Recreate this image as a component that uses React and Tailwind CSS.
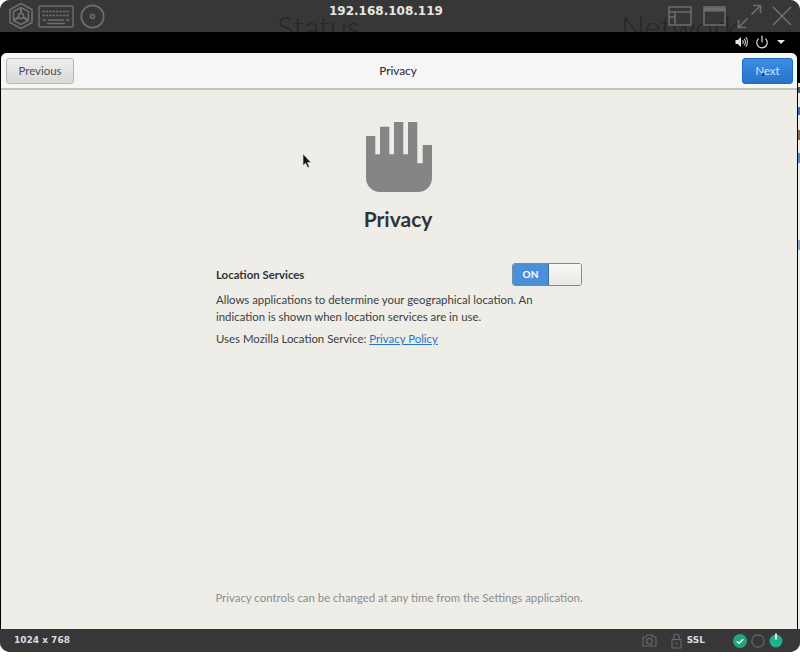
import { Power } from "lucide-react";

const UI_FONT = "font-['Lato',sans-serif]";

function LogoIcon() {
  return (
    <svg width="26" height="28" viewBox="0 0 26 28" fill="none" stroke="#6e6e6e" strokeWidth="1.6" strokeLinejoin="round">
      <path d="M13 1.5 24 7.5V20.5L13 26.5 2 20.5V7.5Z" />
      <path d="M13 5.5 20.5 9.5V18.5L13 22.5 5.5 18.5V9.5Z" />
      <circle cx="13" cy="14" r="2.6" />
      <path d="M13 5.5V11.4M5.5 18.5 10.7 15.3M20.5 18.5 15.3 15.3" strokeWidth="2.2" />
    </svg>
  );
}

function KeyboardIcon() {
  return (
    <svg width="36" height="23" viewBox="0 0 36 23" fill="none" stroke="#6e6e6e">
      <rect x="1" y="1" width="34" height="21" rx="1.5" strokeWidth="1.5" />
      <path d="M4.5 6.5H31.5M4.5 10.5H31.5" strokeWidth="1.6" strokeDasharray="2.4 1" />
      <path d="M4.5 15H8M10 15H26M28 15H31.5M9 18.5H27" strokeWidth="1.4" />
    </svg>
  );
}

function DiscIcon() {
  return (
    <svg width="25" height="25" viewBox="0 0 25 25" fill="none" stroke="#6e6e6e">
      <circle cx="12.5" cy="12.5" r="11.2" strokeWidth="1.7" />
      <circle cx="12.5" cy="12.5" r="2" strokeWidth="1.6" />
    </svg>
  );
}

function LayoutIcon() {
  return (
    <svg width="24" height="20" viewBox="0 0 24 20" fill="none" stroke="#6e6e6e" strokeWidth="1.5">
      <rect x="1" y="1" width="22" height="18" />
      <path d="M1 6H23M7 6V19M1 11H7" />
    </svg>
  );
}

function WindowIcon() {
  return (
    <svg width="23" height="20" viewBox="0 0 23 20" fill="none" stroke="#6e6e6e" strokeWidth="1.5">
      <rect x="1" y="1" width="21" height="18" />
      <path d="M1 3.5H22" strokeWidth="4" />
    </svg>
  );
}

function ExpandIcon() {
  return (
    <svg width="25" height="25" viewBox="0 0 25 25" fill="none" stroke="#6e6e6e" strokeWidth="1.7">
      <path d="M14.5 10.5 23.5 1.5M16 1.5H23.5V9M10.5 14.5 1.5 23.5M1.5 16V23.5H9" />
    </svg>
  );
}

function CloseIcon() {
  return (
    <svg width="20" height="20" viewBox="0 0 20 20" fill="none" stroke="#6e6e6e" strokeWidth="1.7">
      <path d="M1 1 19 19M19 1 1 19" />
    </svg>
  );
}

function SpeakerIcon() {
  return (
    <svg width="13" height="12" viewBox="0 0 13 12" fill="none">
      <path d="M0.5 4H2.8L6 1V11L2.8 8H0.5Z" fill="#e4e4e4" />
      <path d="M7.6 4.2C8.4 5.2 8.4 6.8 7.6 7.8M9.2 2.8C10.7 4.6 10.7 7.4 9.2 9.2M10.8 1.2C13 3.8 13 8.2 10.8 10.8" stroke="#d0d0d0" strokeWidth="1.1" />
    </svg>
  );
}

function HandIcon() {
  return (
    <svg width="66" height="70" viewBox="0 0 66 70" fill="#858585">
      <path d="M0 14H9.3V32.3H14V4.7H23.3V32.3H28V0H37.3V32.3H42V0H51.3V41.3H56.7V23H66V56a14 14 0 0 1-14 14H14A14 14 0 0 1 0 56Z" />
    </svg>
  );
}

function CursorIcon() {
  return (
    <svg width="10" height="16" viewBox="0 0 10 16">
      <path d="M1 1V12.5L3.6 10.2 5.6 14.6 7.4 13.8 5.4 9.6H9Z" fill="#111" stroke="#d8d8d8" strokeWidth="0.7" />
    </svg>
  );
}

function CameraIcon() {
  return (
    <svg width="15" height="13" viewBox="0 0 15 13" fill="none" stroke="#696969" strokeWidth="1.1">
      <path d="M1 3H4L5 1H10L11 3H14V12H1Z" />
      <circle cx="7.5" cy="7.2" r="2.8" />
    </svg>
  );
}

function LockIcon() {
  return (
    <svg width="11" height="16" viewBox="0 0 11 16" fill="none" stroke="#696969" strokeWidth="1.1">
      <rect x="1" y="6.5" width="9" height="8.5" />
      <path d="M2.8 6.5V3.8C2.8 0.4 8.2 0.4 8.2 3.8V6.5" />
      <path d="M5.5 9.5V11.5" strokeWidth="1.6" />
    </svg>
  );
}

function StatusIcons() {
  return (
    <div className="flex items-center gap-[4px]">
      <svg width="14" height="14" viewBox="0 0 14 14" fill="none">
        <circle cx="7" cy="7" r="7" fill="#1fa67f" />
        <path d="M3.8 7.2 6 9.2 10.2 5.2" stroke="#eefaf6" strokeWidth="1.5" />
      </svg>
      <svg width="14" height="14" viewBox="0 0 14 14" fill="none">
        <circle cx="7" cy="7" r="6.2" stroke="#666" strokeWidth="1.2" />
      </svg>
      <svg width="14" height="15" viewBox="0 0 14 15" fill="none">
        <circle cx="7" cy="8" r="6.5" fill="#1fb28a" />
        <path d="M7 0.5V6.5" stroke="#e8e8e8" strokeWidth="2" />
      </svg>
    </div>
  );
}

// sliver of the page behind the guest screen, visible at the right edge
function BackdropSliver() {
  return (
    <div className="ml-[1px] mt-[30px] flex w-[2px] flex-col bg-[#ececec]">
      <div className="mt-[4px] h-[6px] bg-[#555555]" />
      <div className="mt-[14px] h-[8px] bg-[#3f6fb5]" />
      <div className="mt-[15px] h-[10px] bg-[#8a6a4a]" />
      <div className="mt-[13px] h-[10px] bg-[#5f88c0]" />
      <div className="mt-[77px] h-[10px] bg-[#8fa8c8]" />
    </div>
  );
}

export default function App() {
  return (
    <div className="h-[660px] w-[800px] overflow-hidden bg-white">
      <div className="flex h-[652px] flex-col overflow-hidden rounded-[10px] bg-[#373737]">
        {/* viewer title bar */}
        <div className="relative flex h-[32px] shrink-0 items-center justify-between overflow-hidden bg-[#373737] pl-[8px] pr-[8px]">
          <span className="absolute left-[277px] top-[9px] font-['Lato',sans-serif] text-[31.5px] leading-[36px] font-light text-[#262626]">Status</span>
          <span className="absolute left-[621px] top-[9px] font-['Lato',sans-serif] text-[31.5px] leading-[36px] font-light text-[#262626]">Network</span>
          <div className="relative flex items-center">
            <LogoIcon />
            <div className="ml-[4px]"><KeyboardIcon /></div>
            <div className="ml-[6px]"><DiscIcon /></div>
          </div>
          <span className="absolute left-[329px] top-[3px] font-['DejaVu_Sans',sans-serif] text-[12px] leading-[16px] font-bold text-[#e6e6e6]">192.168.108.119</span>
          <div className="relative flex items-center">
            <LayoutIcon />
            <div className="ml-[11px]"><WindowIcon /></div>
            <div className="ml-[11px]"><ExpandIcon /></div>
            <div className="ml-[10px]"><CloseIcon /></div>
          </div>
        </div>

        {/* guest screen */}
        <div className="flex min-h-0 flex-1 flex-col bg-black">
          <div className="flex h-[21px] shrink-0 items-center justify-end gap-[8px] pr-[15px] pb-[2px]">
            <div className="mr-[-1px]"><SpeakerIcon /></div>
            <Power size={14} color="#e4e4e4" strokeWidth={2} />
            <div className="h-0 w-0 border-x-[4px] border-t-[4px] border-x-transparent border-t-[#e4e4e4]" />
          </div>

          <div className="flex min-h-0 flex-1 pl-[1px]">
            <div className={`relative flex min-w-0 flex-1 flex-col overflow-hidden rounded-t-[6px] bg-[#eeede7] text-[#2e3436] ${UI_FONT}`}>
              {/* header */}
              <div className="relative flex h-[37px] shrink-0 items-center justify-between border-b-2 border-[#c4c4bf] bg-[#f6f6f6] pl-[5px] pr-[4px]">
                <button className="flex h-[26px] w-[68px] items-center justify-center rounded-[3px] border border-[#b8b8b4] bg-gradient-to-b from-[#eeeeec] to-[#d8d8d6] text-[11.4px] text-[#4a4f50]">
                  Previous
                </button>
                <span className="absolute left-0 right-[2px] text-center text-[11.7px] font-medium">Privacy</span>
                <button className="relative flex h-[26px] w-[51px] items-center justify-center rounded-[3px] border border-[#1b6acb] bg-gradient-to-b from-[#3e8ee0] to-[#2a72c8] text-[11.4px] text-[#d4e4f5]">
                  Next
                  <span className="absolute left-[19px] top-[14px] h-[3px] w-[2px] bg-[#1a2fd0]" />
                </button>
              </div>

              {/* page */}
              <div className="relative flex min-h-0 flex-1 flex-col items-center pt-[32px]">
                <div className="absolute left-[301px] top-[63px]"><CursorIcon /></div>
                <HandIcon />
                <h1 className="mt-[12px] mr-[2px] text-[21px] leading-[30px] font-bold">Privacy</h1>

                <div className="mt-[28px] w-[366px] text-[11.4px] leading-[17px] text-[#3a3f41]">
                  <div className="flex items-center justify-between">
                    <span className="font-bold text-[#2e3436]">Location Services</span>
                    <div className="mt-[1px] flex h-[23px] w-[70px] overflow-hidden rounded-[3px] border border-[#6d8db0]">
                      <div className="flex w-[35px] items-center justify-center bg-[#4a90d9] text-[10px] font-bold text-white">ON</div>
                      <div className="flex-1 border-l border-[#3f6ea3] bg-gradient-to-b from-[#f8f8f7] to-[#e8e8e5]" />
                    </div>
                  </div>
                  <p className="mt-[5px] w-[320px]">Allows applications to determine your geographical location. An indication is shown when location services are in use.</p>
                  <p className="mt-[5px]">
                    Uses Mozilla Location Service: <a className="text-[#2a76c6] underline">Privacy Policy</a>
                  </p>
                </div>

                <p className="mt-auto mb-[23px] text-[11.4px] leading-[17px] text-[#8b8e8f]">
                  Privacy controls can be changed at any time from the Settings application.
                </p>
              </div>
            </div>
            <BackdropSliver />
          </div>
        </div>

        {/* viewer status bar */}
        <div className="flex h-[23px] shrink-0 items-center justify-between bg-[#373737] pl-[14px] pr-[17px]">
          <span className="font-['DejaVu_Sans',sans-serif] text-[9px] font-bold text-[#d8dde2]">1024 x 768</span>
          <div className="flex items-center">
            <CameraIcon />
            <div className="ml-[14px]"><LockIcon /></div>
            <span className="ml-[5px] font-['DejaVu_Sans',sans-serif] text-[9px] font-bold text-[#d8dde2]">SSL</span>
            <div className="ml-[28px]"><StatusIcons /></div>
          </div>
        </div>
      </div>
    </div>
  );
}
